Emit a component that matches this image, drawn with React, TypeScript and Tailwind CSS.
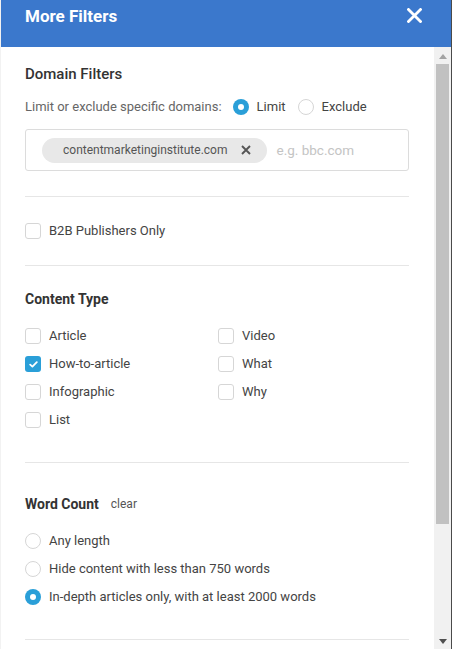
import React from "react";

const font = { fontFamily: "Roboto, 'Liberation Sans', sans-serif" };

function Checkbox({ checked = false }: { checked?: boolean }) {
  return checked ? (
    <span className="flex h-[16px] w-[16px] shrink-0 items-center justify-center rounded-[3px] bg-[#2a9fd8]">
      <svg width="9" height="7" viewBox="0 0 9 7" fill="none">
        <path d="M1.2 3.6 L3.4 5.6 L7.8 1.2" stroke="white" strokeWidth="1.8" strokeLinecap="round" strokeLinejoin="round" />
      </svg>
    </span>
  ) : (
    <span className="h-[16px] w-[16px] shrink-0 rounded-[3px] border border-[#d6d6d6] bg-white" />
  );
}

function Radio({ checked = false }: { checked?: boolean }) {
  return checked ? (
    <span className="flex h-[16px] w-[16px] shrink-0 items-center justify-center rounded-full bg-[#2a9fd8]">
      <span className="h-[6px] w-[6px] rounded-full bg-white" />
    </span>
  ) : (
    <span className="h-[16px] w-[16px] shrink-0 rounded-full border border-[#d6d6d6] bg-white" />
  );
}

function CheckRow({ label, checked = false }: { label: string; checked?: boolean }) {
  return (
    <div className="flex h-[28px] items-center gap-[8px]">
      <Checkbox checked={checked} />
      <span className="text-[13px] text-[#444]">{label}</span>
    </div>
  );
}

function RadioRow({ label, checked = false }: { label: string; checked?: boolean }) {
  return (
    <div className="flex h-[28px] items-center gap-[8px]">
      <Radio checked={checked} />
      <span className="text-[13px] text-[#444]">{label}</span>
    </div>
  );
}

export default function App() {
  return (
    <div className="flex h-[649px] w-[452px] flex-col overflow-hidden border-l border-r border-l-[#f2f2f2] border-r-[#4a4a4a] bg-white" style={font}>
      <header className="flex h-[47px] shrink-0 items-start justify-between bg-[#3b78cc] pl-[24px] pr-[29px]">
        <h1 className="pt-[5px] text-[17px] font-bold leading-[22px] text-white">More Filters</h1>
        <svg className="mt-[8px]" width="15" height="15" viewBox="0 0 15 15">
          <path d="M1.5 1.5 L13.5 13.5 M13.5 1.5 L1.5 13.5" stroke="white" strokeWidth="2.8" strokeLinecap="square" />
        </svg>
      </header>
      <div className="flex min-h-0 flex-1">
        <main className="min-w-0 flex-1 overflow-hidden pl-[24px] pr-[25px]">
          <div className="pt-[17px]">
            <h2 className="h-[20px] text-[15px] font-medium leading-[20px] text-[#333]">Domain Filters</h2>
            <div className="mt-[13px] flex h-[20px] items-center text-[13px]">
              <span className="text-[#666]">Limit or exclude specific domains:</span>
              <span className="ml-[11px] flex items-center gap-[8px]">
                <Radio checked />
                <span className="text-[#444]">Limit</span>
              </span>
              <span className="ml-[12px] flex items-center gap-[8px]">
                <Radio />
                <span className="text-[#444]">Exclude</span>
              </span>
            </div>
            <div className="mt-[12px] flex h-[42px] items-center rounded-[3px] border border-[#dcdcdc] pl-[16px]">
              <span className="flex h-[25px] items-center rounded-full bg-[#e8e8e8] pl-[21px] pr-[16px]">
                <span className="text-[12px] text-[#555]">contentmarketinginstitute.com</span>
                <svg className="ml-[14px]" width="10" height="10" viewBox="0 0 10 10">
                  <path d="M1 1 L9 9 M9 1 L1 9" stroke="#555" strokeWidth="1.9" />
                </svg>
              </span>
              <span className="ml-[9px] text-[13.5px] text-[#c4c4c4]">e.g. bbc.com</span>
            </div>
          </div>

          <div className="mt-[25px] border-t border-[#e6e6e6]" />

          <div className="mt-[24px] flex h-[20px] items-center gap-[8px]">
            <Checkbox />
            <span className="text-[13px] text-[#444]">B2B Publishers Only</span>
          </div>

          <div className="mt-[24px] border-t border-[#e6e6e6]" />

          <h2 className="mt-[23px] h-[20px] text-[14px] font-bold leading-[20px] text-[#333]">Content Type</h2>
          <div className="mt-[13px] grid grid-cols-[193px_1fr]">
            <CheckRow label="Article" />
            <CheckRow label="Video" />
            <CheckRow label="How-to-article" checked />
            <CheckRow label="What" />
            <CheckRow label="Infographic" />
            <CheckRow label="Why" />
            <CheckRow label="List" />
          </div>

          <div className="mt-[28px] border-t border-[#e6e6e6]" />

          <div className="mt-[31px] flex h-[20px] items-center gap-[12px]">
            <h2 className="text-[14px] font-bold leading-[20px] text-[#333]">Word Count</h2>
            <span className="text-[12px] text-[#555]">clear</span>
          </div>
          <div className="mt-[13px] flex flex-col">
            <RadioRow label="Any length" />
            <RadioRow label="Hide content with less than 750 words" />
            <RadioRow label="In-depth articles only, with at least 2000 words" checked />
          </div>

          <div className="mt-[28px] border-t border-[#e6e6e6]" />
          <div className="h-[200px]" />
        </main>
        <aside className="flex w-[17px] shrink-0 flex-col items-center bg-[#f1f1f1]">
          <svg className="mt-[7px]" width="8" height="5" viewBox="0 0 8 5">
            <path d="M0 5 L4 0 L8 5 Z" fill="#a3a3a3" />
          </svg>
          <div className="mt-[5px] h-[460px] w-[13px] bg-[#c1c1c1]" />
          <div className="flex-1" />
          <svg className="mb-[5px]" width="8" height="5" viewBox="0 0 8 5">
            <path d="M0 0 L8 0 L4 5 Z" fill="#505050" />
          </svg>
        </aside>
      </div>
    </div>
  );
}
